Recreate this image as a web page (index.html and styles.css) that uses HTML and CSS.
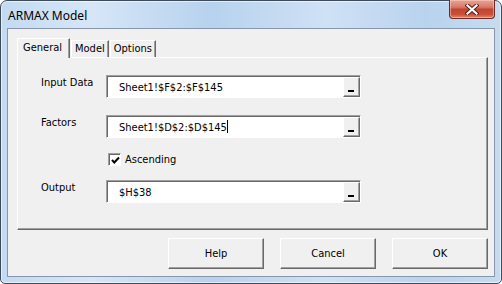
FILE: index.html
```html
<!DOCTYPE html>
<html lang="en">
<head>
  <meta charset="UTF-8" />
  <title>ARMAX Model</title>
<link rel="stylesheet" href="styles.css">
</head>
<body>

<div class="window">
  <div class="titlebar">
    <span class="title">ARMAX Model</span>
    <div class="close">
      <svg width="14" height="11" viewBox="0 0 14 11">
        <path d="M2.5 1.5 L11.5 9.5 M11.5 1.5 L2.5 9.5" stroke="#5a1a12" stroke-width="4" stroke-linecap="square"/>
        <path d="M2.5 1.5 L11.5 9.5 M11.5 1.5 L2.5 9.5" stroke="#fff" stroke-width="2.2" stroke-linecap="square"/>
      </svg>
    </div>
  </div>

  <div class="client">
    <div class="tabs">
      <div class="tab active">General</div>
      <div class="tab">Model</div>
      <div class="tab">Options</div>
    </div>

    <div class="panel">
      <div class="field">
        <span class="label">Input Data</span>
        <div class="refedit"><span class="value">Sheet1!$F$2:$F$145</span><span class="collapse"></span></div>
      </div>
      <div class="field">
        <span class="label">Factors</span>
        <div class="refedit"><span class="value">Sheet1!$D$2:$D$145<i class="caret"></i></span><span class="collapse"></span></div>
      </div>
      <div class="check">
        <span class="box">
          <svg width="9" height="9" viewBox="0 0 9 9">
            <path d="M1 4 L3.3 6.5 L8 1.5" fill="none" stroke="#000" stroke-width="2"/>
          </svg>
        </span>
        <span>Ascending</span>
      </div>
      <div class="field output">
        <span class="label">Output</span>
        <div class="refedit"><span class="value">$H$38</span><span class="collapse"></span></div>
      </div>
    </div>

    <div class="buttons">
      <div class="btn">Help</div>
      <div class="btn">Cancel</div>
      <div class="btn">OK</div>
    </div>
  </div>
</div>

</body>
</html>
```

FILE: styles.css
```css
body {
  margin: 0;
  font-family: "DejaVu Sans Condensed", "DejaVu Sans", sans-serif;
  font-stretch: semi-condensed;
  font-size: 11px;
  color: #000;
}

.window {
  width: 502px;
  height: 284px;
  box-sizing: border-box;
  border: 1px solid #3d4a5a;
  border-radius: 7px 7px 5px 5px;
  padding: 0 6px 6px;
  background: linear-gradient(to right, #c4daf1 0%, #d6e6f7 18%, #b7d2ee 42%, #cfe1f5 65%, #b9d3ee 85%, #c6dbf2 100%);
  box-shadow: inset 0 0 0 1px rgba(255, 255, 255, 0.6);
  display: flex;
  flex-direction: column;
}

.titlebar {
  height: 27px;
  display: flex;
  align-items: flex-start;
}

.title {
  font-family: "Noto Sans", sans-serif;
  font-stretch: normal;
  font-size: 12px;
  line-height: 14px;
  margin: 8px 0 0 1px;
  color: #000;
}

.close {
  margin-left: auto;
  margin-top: -1px;
  width: 46px;
  height: 19px;
  box-sizing: border-box;
  border: 1px solid #6e2a20;
  border-top: none;
  border-radius: 0 0 4px 4px;
  background: linear-gradient(to bottom, #e7a597 0%, #d7786a 40%, #c4432f 52%, #c9503b 80%, #e18a6c 100%);
  box-shadow: inset 0 0 0 1px rgba(255, 210, 200, 0.5);
  display: flex;
  align-items: center;
  justify-content: center;
}

.client {
  flex: 1;
  border: 1px solid #8797a9;
  background: #f0f0f0;
  padding: 9px 6px 0 9px;
  display: flex;
  flex-direction: column;
}

.tabs {
  display: flex;
  align-items: flex-end;
  height: 20px;
  margin-bottom: -1px;
  position: relative;
  z-index: 1;
}

.tab {
  height: 16px;
  line-height: 15px;
  padding: 0 3px 0 3px;
  border-top: 1px solid #fff;
  border-left: 1px solid #fff;
  border-right: 1px solid #696969;
  box-shadow: inset -1px 0 #a0a0a0;
  background: #f0f0f0;
  margin-bottom: 1px;
}

.tab + .tab {
  margin-left: 1px;
}

.tab.active {
  height: 19px;
  line-height: 17px;
  padding: 0 7px 0 5px;
  margin-bottom: 0;
}

.panel {
  width: 471px;
  height: 173px;
  box-sizing: border-box;
  border: 1px solid;
  border-color: #fff #696969 #696969 #fff;
  box-shadow: inset -1px -1px #a0a0a0;
  padding: 17px 0 0 23px;
  display: flex;
  flex-direction: column;
}

.field {
  display: flex;
  align-items: flex-start;
}

.field + .field {
  margin-top: 17px;
}

.label {
  width: 65px;
  line-height: 13px;
  padding-top: 1px;
}

.refedit {
  width: 255px;
  height: 23px;
  box-sizing: border-box;
  border: 1px solid;
  border-color: #a0a0a0 #fff #fff #a0a0a0;
  box-shadow: inset 1px 1px #696969;
  background: #fff;
  display: flex;
  align-items: center;
  padding: 1px 0 0 12px;
}

.value {
  flex: 1;
  position: relative;
}

.caret {
  display: inline-block;
  width: 1px;
  height: 13px;
  background: #000;
  vertical-align: -2px;
}

.collapse {
  width: 17px;
  height: 20px;
  box-sizing: border-box;
  align-self: flex-end;
  border: 1px solid;
  border-color: #fff #696969 #696969 #fff;
  box-shadow: inset -1px -1px #a0a0a0;
  background: #f0f0f0;
  position: relative;
}

.collapse::after {
  content: "";
  position: absolute;
  left: 4px;
  bottom: 4px;
  width: 6px;
  height: 2px;
  background: #000;
}

.check {
  display: flex;
  align-items: center;
  margin: 15px 0 0 67px;
  height: 13px;
  gap: 4px;
}

.box {
  width: 13px;
  height: 13px;
  box-sizing: border-box;
  border: 1px solid;
  border-color: #a0a0a0 #fff #fff #a0a0a0;
  box-shadow: inset 1px 1px #696969;
  background: #fff;
  display: flex;
  align-items: center;
  justify-content: center;
  padding: 1px 0 0 1px;
}

.field.output {
  margin-top: 14px;
}

.buttons {
  display: flex;
  justify-content: flex-end;
  gap: 16px;
  margin-top: 8px;
}

.btn {
  width: 96px;
  height: 31px;
  box-sizing: border-box;
  border: 1px solid;
  border-color: #fff #696969 #696969 #fff;
  box-shadow: inset -1px -1px #a0a0a0;
  background: #f0f0f0;
  display: flex;
  align-items: center;
  justify-content: center;
}
```
